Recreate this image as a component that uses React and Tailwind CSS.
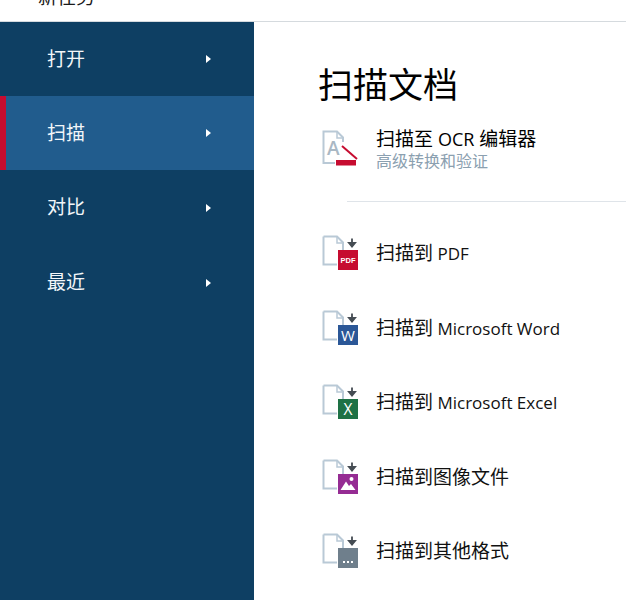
import React from 'react';

const font = "font-['Open_Sans','Noto_Sans_CJK_SC',sans-serif]";

const navItems = [
  { label: '打开', height: 'h-[74px]' },
  { label: '扫描', height: 'h-[74px]', active: true },
  { label: '对比', height: 'h-[75px]' },
  { label: '最近', height: 'h-[75px]' },
];

const DocOutline = () => (
  <>
    <path d="M1.5 1.5H15L21 7.5V15" fill="none" stroke="#b9c9d6" strokeWidth="2" />
    <path d="M1.5 1.5V29.5H15" fill="none" stroke="#b9c9d6" strokeWidth="2" />
    <path d="M15 1.5V8H21" fill="none" stroke="#b9c9d6" strokeWidth="1.5" />
    <path d="M30 3.5V8.5M27 8L30 11.5L33 8Z" fill="#454c53" stroke="#454c53" strokeWidth="1.8" />
  </>
);

const Badge = ({ color, children }) => (
  <>
    <DocOutline />
    <rect x="16" y="15" width="20" height="20" fill={color} />
    {children}
  </>
);

const icons = {
  pdf: (
    <Badge color="#c60c30">
      <text x="26" y="28" textAnchor="middle" fontSize="7.5" fontWeight="700" fill="#fff" fontFamily="Liberation Sans, sans-serif">PDF</text>
    </Badge>
  ),
  word: (
    <Badge color="#2b5797">
      <text x="26" y="31" textAnchor="middle" fontSize="15" fill="#fff" fontFamily="Open Sans, sans-serif">W</text>
    </Badge>
  ),
  excel: (
    <Badge color="#1e7145">
      <text x="26" y="31" textAnchor="middle" fontSize="15.5" fill="#fff" fontFamily="Open Sans, sans-serif">X</text>
    </Badge>
  ),
  image: (
    <Badge color="#952c93">
      <circle cx="29.5" cy="20" r="2" fill="#fff" />
      <path d="M18.5 31L24 22.5L27 27L29 25L33.5 31Z" fill="#fff" />
    </Badge>
  ),
  other: (
    <Badge color="#6f7f8c">
      <rect x="21" y="28" width="2" height="2" fill="#fff" />
      <rect x="25" y="28" width="2" height="2" fill="#fff" />
      <rect x="29" y="28" width="2" height="2" fill="#fff" />
    </Badge>
  ),
};

const rows = [
  { icon: 'pdf', label: '扫描到', latin: 'PDF' },
  { icon: 'word', label: '扫描到', latin: 'Microsoft Word' },
  { icon: 'excel', label: '扫描到', latin: 'Microsoft Excel' },
  { icon: 'image', label: '扫描到图像文件' },
  { icon: 'other', label: '扫描到其他格式' },
];

const OcrIcon = () => (
  <svg width="36" height="36" viewBox="0 0 36 36" className="shrink-0">
    <path d="M13 33H1.5V1.5H15L21 7.5V12" fill="none" stroke="#b9c9d6" strokeWidth="2" />
    <path d="M15 1.5V8H21" fill="none" stroke="#b9c9d6" strokeWidth="1.5" />
    <text x="5" y="25" fontSize="19" fontWeight="600" fill="#a9b8c4" fontFamily="Open Sans, sans-serif">A</text>
    <path d="M20 16L35 29" stroke="#c60c30" strokeWidth="2" />
    <rect x="14" y="30" width="20" height="5.5" fill="#c60c30" />
  </svg>
);

export default function App() {
  return (
    <div className={`w-[626px] h-[600px] overflow-hidden flex flex-col bg-white ${font}`}>
      <div className="h-[22px] shrink-0 border-b border-[#d5dade] overflow-hidden pl-[38px] flex items-end">
        <span className="text-[19px] leading-[24px] mb-[12px] text-[#1a1a1a]">新任务</span>
      </div>
      <div className="flex flex-1 min-h-0">
        <nav className="w-[254px] shrink-0 bg-[#0e3f63]">
          {navItems.map((item) => (
            <div
              key={item.label}
              className={`${item.height} flex items-center justify-between pr-[43px] text-[19px] text-[#f2f6f9] border-l-[6px] pl-[41px] ${
                item.active ? 'bg-[#215c8d] border-[#c60c30]' : 'border-transparent'
              }`}
            >
              <span>{item.label}</span>
              <span className="w-0 h-0 border-y-[4px] border-y-transparent border-l-[5px] border-l-white" />
            </div>
          ))}
        </nav>
        <main className="flex-1 min-w-0">
          <h1 className="pl-[64px] pt-[39px] text-[35px] leading-[48px] font-normal text-black">扫描文档</h1>
          <div className="pl-[68px] mt-[10px] h-[58px] flex items-center gap-[18px]">
            <OcrIcon />
            <div>
              <div className="text-[19px] leading-[26px] text-black">
                扫描至 <span className="text-[18px]">OCR</span> 编辑器
              </div>
              <div className="text-[16px] leading-[19px] text-[#8ba0b0]">高级转换和验证</div>
            </div>
          </div>
          <div className="ml-[93px] mt-[24px] h-px bg-[#dfe4e9]" />
          <div className="mt-[14px]">
            {rows.map((row) => (
              <div key={row.icon} className="h-[74.5px] pl-[68px] flex items-center gap-[18px]">
                <svg width="36" height="36" viewBox="0 0 36 36" className="shrink-0">
                  {icons[row.icon]}
                </svg>
                <span className="text-[19px] text-[#111]">
                  {row.label}
                  {row.latin && <span className="text-[17px]"> {row.latin}</span>}
                </span>
              </div>
            ))}
          </div>
        </main>
      </div>
    </div>
  );
}
